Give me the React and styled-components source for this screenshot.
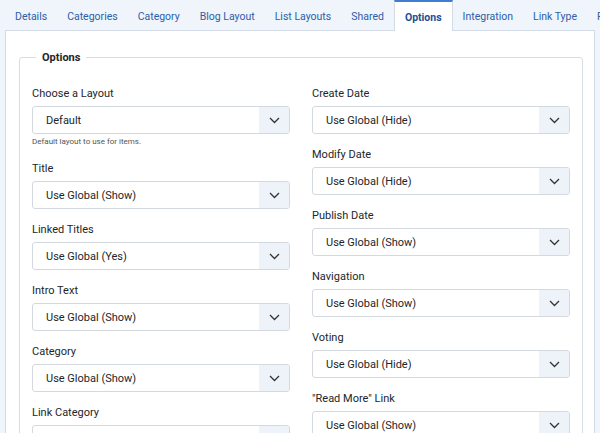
import React from "react";
import styled, { createGlobalStyle } from "styled-components";

const G = createGlobalStyle`
  body { margin:0; background:#f0f4fb; font-family: Roboto, "Noto Sans", sans-serif; overflow:hidden; }
`;
const Page = styled.div`width:600px;height:433px;overflow:hidden;padding-left:5px;box-sizing:border-box;`;
const Tabs = styled.div`display:flex;height:30px;align-items:stretch;white-space:nowrap;`;
const Tab = styled.div`
  padding:0 10px; display:flex; align-items:center; font-size:10.5px; color:#2d5ea8; flex-shrink:0;
  ${p => p.active ? `background:#fff;border:1px solid #d3dbe7;border-top:2px solid #3f7dd0;border-bottom:none;font-weight:700;color:#1f4e94;margin-bottom:-1px;padding-top:1px;` : `border-top:2px solid transparent;`}
`;
const Panel = styled.div`background:#fff;border:1px solid #d3dbe7;width:590px;box-sizing:border-box;height:420px;padding:20px 12px 0 13px;`;
const Fieldset = styled.fieldset`margin:0;border:1px solid #d8dde5;border-radius:3px;padding:12px 12px 0 12px;height:400px;box-sizing:border-box;`;
const Legend = styled.legend`font-size:11px;font-weight:700;color:#22262a;padding:0 6px;margin-left:4px;`;
const Cols = styled.div`display:grid;grid-template-columns:258px 258px;column-gap:22px;margin-top:11px;`;
const Col = styled.div`display:flex;flex-direction:column;`;
const Field = styled.div`margin-bottom:${p => p.help ? 15 : 14}px;`;
const Label = styled.div`font-size:11px;color:#22262a;height:13px;line-height:13px;margin-bottom:6px;`;
const Select = styled.div`display:flex;height:28px;border:1px solid #d4d9e0;border-radius:3px;box-sizing:border-box;font-size:11px;color:#22262a;overflow:hidden;`;
const Val = styled.div`flex:1;display:flex;align-items:center;padding-left:13px;`;
const Arrow = styled.div`width:30px;background:#eef2f9;display:flex;align-items:center;justify-content:center;`;
const Help = styled.div`font-size:8px;color:#555;margin-top:3px;height:10px;line-height:10px;`;

const Chev = () => (
  <svg width="11" height="7" viewBox="0 0 11 7"><path d="M1 1l4.5 4.5L10 1" fill="none" stroke="#333" strokeWidth="1.3"/></svg>
);
const F = ({ label, value, help }) => (
  <Field help={help}>
    <Label>{label}</Label>
    <Select><Val>{value}</Val><Arrow><Chev/></Arrow></Select>
    {help && <Help>{help}</Help>}
  </Field>
);

const left = [["Choose a Layout","Default","Default layout to use for items."],["Title","Use Global (Show)"],["Linked Titles","Use Global (Yes)"],["Intro Text","Use Global (Show)"],["Category","Use Global (Show)"],["Link Category","Use Global (Show)"]];
const right = [["Create Date","Use Global (Hide)"],["Modify Date","Use Global (Hide)"],["Publish Date","Use Global (Show)"],["Navigation","Use Global (Show)"],["Voting","Use Global (Hide)"],["\"Read More\" Link","Use Global (Show)"]];
const tabs = ["Details","Categories","Category","Blog Layout","List Layouts","Shared","Options","Integration","Link Type","Pa"];

export default function App() {
  return (
    <Page>
      <G/>
      <Tabs>{tabs.map(t => <Tab key={t} active={t==="Options"}>{t}</Tab>)}</Tabs>
      <Panel>
        <Fieldset>
          <Legend>Options</Legend>
          <Cols>
            <Col>{left.map(([l,v,h]) => <F key={l} label={l} value={v} help={h}/>)}</Col>
            <Col>{right.map(([l,v]) => <F key={l} label={l} value={v}/>)}</Col>
          </Cols>
        </Fieldset>
      </Panel>
    </Page>
  );
}
